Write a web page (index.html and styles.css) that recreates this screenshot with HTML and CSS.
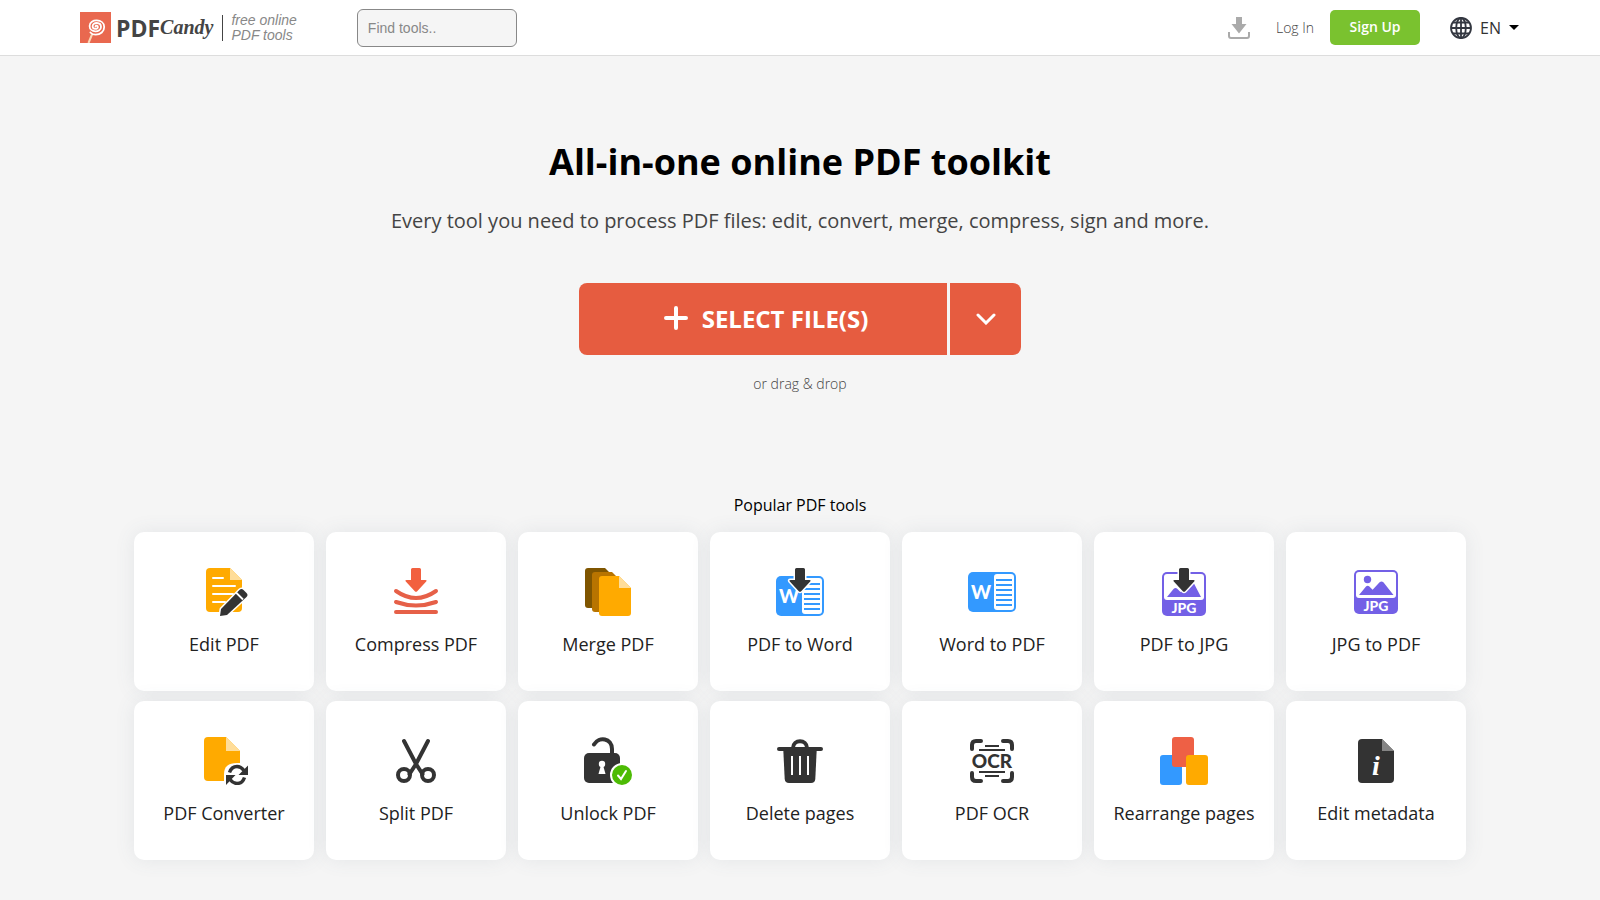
FILE: index.html
```
<!DOCTYPE html>
<html lang="en">
<head>
  <meta charset="UTF-8" />
  <meta name="viewport" content="width=device-width, initial-scale=1" />
  <title>PDF Candy - All-in-one online PDF toolkit</title>
  <link rel="stylesheet" href="styles.css">
</head>
<body>

  <header class="header">
    <a class="logo" href="#">
      <svg class="logo-mark" viewBox="0 0 31 31">
        <rect width="31" height="31" fill="#e9684f"/>
        <path d="M12 22.500 8.500 31" stroke="#fbd9b8" stroke-width="2"/>
        <path d="M15.500 14.500c0-1.500 2.400-1.200 2.400.6 0 2.500-5.300 2.700-5.300-.9 0-4.400 8.400-4.400 8.400.7 0 6-11.400 6-11.400-1 0-7.600 14.600-7.200 14.600 1 0 4.500-3.700 7.800-8.500 7.800-2.300 0-4.200-.9-5.300-2.200" fill="none" stroke="#fff" stroke-width="1.800" stroke-linecap="round"/>
      </svg>
      <span class="logo-pdf">PDF</span><span class="logo-candy">Candy</span>
      <span class="logo-slogan">free online<br>PDF tools</span>
    </a>
    <input class="search" type="text" placeholder="Find tools.." aria-label="Find tools">

    <nav class="user-nav">
      <a class="downloads" href="#" aria-label="Downloads">
        <svg width="22" height="22" viewBox="0 0 22 22" fill="#aaa">
          <path d="M8 0h6v7h4.500L11 16.500 3.500 7H8z"/>
          <path d="M1 15v4q0 2 2 2h16q2 0 2-2v-4" fill="none" stroke="#aaa" stroke-width="2"/>
        </svg>
      </a>
      <a class="login" href="#">Log In</a>
      <a class="signup" href="#">Sign Up</a>
      <button class="lang" type="button">
        <svg width="22" height="22" viewBox="0 0 22 22" fill="none" stroke="#333740" stroke-width="1.800">
          <circle cx="11" cy="11" r="10"/>
          <ellipse cx="11" cy="11" rx="4.800" ry="10"/>
          <path d="M11 1v20M1 11h20M3 5.500h16M3 16.500h16"/>
        </svg>
        <span>EN</span>
        <i class="caret"></i>
      </button>
    </nav>
  </header>

  <main>
    <section class="hero">
      <h1>All-in-one online PDF toolkit</h1>
      <p class="subtitle">Every tool you need to process PDF files: edit, convert, merge, compress, sign and more.</p>
      <div class="upload">
        <button class="upload-main" type="button">
          <svg width="24" height="24" viewBox="0 0 24 24"><path d="M12 2v20M2 12h20" stroke="#fff" stroke-width="4" stroke-linecap="round"/></svg>
          <span>SELECT FILE(S)</span>
        </button>
        <button class="upload-more" type="button" aria-label="More sources">
          <svg width="20" height="12" viewBox="0 0 20 12"><path d="M2 2l8 8 8-8" fill="none" stroke="#fff" stroke-width="3" stroke-linecap="round"/></svg>
        </button>
      </div>
      <p class="drop">or drag &amp; drop</p>
    </section>

    <section class="tools">
      <h2>Popular PDF tools</h2>
      <div class="grid">

        <a class="card" href="#">
          <svg viewBox="0 0 48 48">
            <path d="M10 0h20l12 12v28q0 4-4 4H10q-4 0-4-4V4q0-4 4-4z" fill="#fa0"/>
            <path d="M30 0l12 12H30z" fill="#ffdd99"/>
            <path d="M13 10h10M13 18h22M13 26h20M13 34h12" stroke="#fff" stroke-width="2" stroke-linecap="round"/>
            <path d="M20 48l1-7 18.500-19q2-2 4 0l3 3q2 2 0 4L27 47z" fill="#333" stroke="#fff" stroke-width="3" paint-order="stroke" stroke-linejoin="round"/>
            <path d="M36 24.500l7 7" stroke="#fff" stroke-width="1.800"/>
          </svg>
          <span>Edit PDF</span>
        </a>

        <a class="card" href="#">
          <svg viewBox="0 0 48 48">
            <path d="M20.500 0h7q1.500 0 1.500 1.500V12h4.500q2 0 .7 1.500l-9 9.700q-1.200 1.200-2.400 0l-9-9.700Q12.500 12 14.500 12H19V1.500Q19 0 20.500 0z" fill="#f2603f"/>
            <path d="M4 23q20 14 40 0M4 34q20 7 40 0M4 44h40" fill="none" stroke="#e66048" stroke-width="4" stroke-linecap="round"/>
          </svg>
          <span>Compress PDF</span>
        </a>

        <a class="card" href="#">
          <svg viewBox="0 0 48 48">
            <path d="M4 0h17l12 12v25q0 3-3 3H4q-3 0-3-3V3q0-3 3-3z" fill="#7f5500"/>
            <path d="M11 4h17l12 12v25q0 3-3 3H11q-3 0-3-3V7q0-3 3-3z" fill="#b87400"/>
            <path d="M18 8h17l12 12v25q0 3-3 3H18q-3 0-3-3V11q0-3 3-3z" fill="#fa0"/>
            <path d="M35 8l12 12H35z" fill="#ffdd99"/>
          </svg>
          <span>Merge PDF</span>
        </a>

        <a class="card" href="#">
          <svg viewBox="0 0 48 48">
            <rect y="8" width="48" height="40" rx="5" fill="#39f"/>
            <rect x="26" y="10" width="20" height="36" rx="3" fill="#fff"/>
            <path d="M28 16h16M28 21h16M28 26h16M28 31h16M28 36h16M28 41h16" stroke="#39f" stroke-width="2"/>
            <text class="w-mark" x="13" y="35">W</text>
            <path class="down" d="M20.500 0h7q1.500 0 1.500 1.500V12h4.500q2 0 .7 1.500l-9 9.700q-1.200 1.200-2.400 0l-9-9.700Q12.500 12 14.500 12H19V1.500Q19 0 20.500 0z"/>
          </svg>
          <span>PDF to Word</span>
        </a>

        <a class="card" href="#">
          <svg viewBox="0 0 48 48">
            <rect y="4" width="48" height="40" rx="5" fill="#39f"/>
            <rect x="26" y="6" width="20" height="36" rx="3" fill="#fff"/>
            <path d="M28 12h16M28 17h16M28 22h16M28 27h16M28 32h16M28 37h16" stroke="#39f" stroke-width="2"/>
            <text class="w-mark" x="13" y="31">W</text>
          </svg>
          <span>Word to PDF</span>
        </a>

        <a class="card" href="#">
          <svg viewBox="0 0 48 48">
            <rect x="2" y="4" width="44" height="44" rx="5" fill="#7360e6"/>
            <rect x="4" y="6" width="40" height="26" rx="3" fill="#fff"/>
            <path d="M7 29l6.500-8q2-2 4 0l3 3 9.500-9q2-1.500 4 .5L41 29z" fill="#7360e6"/>
            <text class="jpg" x="24" y="45">JPG</text>
            <path class="down" d="M20.500 0h7q1.500 0 1.500 1.500V12h4.500q2 0 .7 1.500l-9 9.700q-1.200 1.200-2.400 0l-9-9.700Q12.500 12 14.500 12H19V1.500Q19 0 20.500 0z"/>
          </svg>
          <span>PDF to JPG</span>
        </a>

        <a class="card" href="#">
          <svg viewBox="0 0 48 48">
            <rect x="2" y="2" width="44" height="44" rx="5" fill="#7360e6"/>
            <rect x="4" y="4" width="40" height="26" rx="3" fill="#fff"/>
            <circle cx="15.500" cy="11.500" r="3.700" fill="#7360e6"/>
            <path d="M7 27l7-8.500q1.700-1.500 3.400 0l3.200 3.200 7-7.400q1.900-1.600 3.800 0L41.500 27z" fill="#7360e6"/>
            <text class="jpg" x="24" y="43">JPG</text>
          </svg>
          <span>JPG to PDF</span>
        </a>

        <a class="card" href="#">
          <svg viewBox="0 0 48 48">
            <path d="M8 0h18l14 14v26q0 4-4 4H8q-4 0-4-4V4q0-4 4-4z" fill="#fa0"/>
            <path d="M26 0l14 14H26z" fill="#ffdd99"/>
            <path d="M24 37q0-11 13-11h11v22H24z" fill="#fff"/>
            <path d="M29.500 35.500q2-6 7.500-6 4 0 7 4M44.500 40.500q-2 6-7.500 6-4 0-7-4" fill="none" stroke="#333" stroke-width="3.400"/>
            <path d="M48 28.500v9.500h-9.500zM26 48v-10h9.500z" fill="#333"/>
          </svg>
          <span>PDF Converter</span>
        </a>

        <a class="card" href="#">
          <svg viewBox="0 0 48 48" fill="none" stroke="#333" stroke-width="4" stroke-linecap="round">
            <path d="M12 4l12 23 6.500 10M36 4L24 27l-6.500 10"/>
            <circle cx="12" cy="38" r="6"/>
            <circle cx="36" cy="38" r="6"/>
          </svg>
          <span>Split PDF</span>
        </a>

        <a class="card" href="#">
          <svg viewBox="0 0 48 48">
            <rect y="16" width="36" height="30" rx="5" fill="#333"/>
            <path d="M10 7.500C15-1 28 1 28 12v5" fill="none" stroke="#333" stroke-width="4" stroke-linecap="round"/>
            <circle cx="18" cy="27" r="3.200" fill="#fff"/>
            <path d="M17 28h2l2.500 9h-7z" fill="#fff"/>
            <circle cx="38" cy="38" r="11" fill="#4dbb05" stroke="#fff" stroke-width="2"/>
            <path d="M34 38.500l3 3.500 5-8" fill="none" stroke="#fff" stroke-width="2" stroke-linecap="round"/>
          </svg>
          <span>Unlock PDF</span>
        </a>

        <a class="card" href="#">
          <svg viewBox="0 0 48 48">
            <path d="M3 12h42" stroke="#333" stroke-width="4" stroke-linecap="round"/>
            <path d="M17 11c0-9 14-9 14 0" fill="none" stroke="#333" stroke-width="4"/>
            <path d="M7.300 13h33.400l-1.400 29q-.3 4-4.300 4H13q-4 0-4.300-4z" fill="#333"/>
            <path d="M16 19v19M24 19v19M32 19v19" stroke="#fff" stroke-width="2"/>
          </svg>
          <span>Delete pages</span>
        </a>

        <a class="card" href="#">
          <svg viewBox="0 0 48 48" fill="none" stroke="#333">
            <path d="M4 12V8q0-4 4-4h5M35 4h5q4 0 4 4v4M44 36v4q0 4-4 4h-5M13 44H8q-4 0-4-4v-4" stroke-width="4" stroke-linecap="round"/>
            <path d="M17 9h14M11 13h26M11 35h26M17 39h14" stroke-width="2"/>
            <text class="ocr" x="24" y="31">OCR</text>
          </svg>
          <span>PDF OCR</span>
        </a>

        <a class="card" href="#">
          <svg viewBox="0 0 48 48">
            <rect y="18" width="22" height="30" rx="3" fill="#39f"/>
            <rect x="12" width="22" height="30" rx="3" fill="#ee6045"/>
            <rect x="26" y="18" width="22" height="30" rx="3" fill="#fa0"/>
          </svg>
          <span>Rearrange pages</span>
        </a>

        <a class="card" href="#">
          <svg viewBox="0 0 48 48">
            <path d="M10 2h20l12 12v28q0 4-4 4H10q-4 0-4-4V6q0-4 4-4z" fill="#333"/>
            <path d="M30 2l12 12H30z" fill="#858585"/>
            <text class="info" x="24" y="38">i</text>
          </svg>
          <span>Edit metadata</span>
        </a>

      </div>
    </section>
  </main>

</body>
</html>
```

FILE: styles.css
```
*{box-sizing:border-box;}
body{margin:0;background:#f5f5f5;color:#222;font-family:"Open Sans", "Liberation Sans", sans-serif;}
a{color:inherit;text-decoration:none;}
button{border:none;padding:0;font-family:inherit;cursor:pointer;}
h1,h2,p{margin:0;}

/* header */
.header{display:flex;align-items:center;height:56px;padding:0 5%;background:#fff;border-bottom:1px solid #ddd;}
.logo{display:flex;align-items:center;}
.logo-mark{width:31px;height:31px;margin-right:5px;}
.logo-pdf{font-size:23px;font-weight:700;color:#444;}
.logo-candy{font:italic 700 20px "Liberation Serif", serif;color:#444;}
.logo-slogan{position:relative;padding-left:18px;font:italic 14px/15px "Liberation Sans", sans-serif;color:#888;white-space:nowrap;}
.logo-slogan::before{content:"";position:absolute;left:9px;top:2px;bottom:2px;border-left:1px solid #444;}
.search{width:160px;height:38px;margin-left:60px;padding:0 10px;background:#f5f5f5;border:1px solid #888;border-radius:6px;font:14px "Liberation Sans", sans-serif;}
.search::placeholder{color:#888;}
.user-nav{display:flex;align-items:center;margin-left:auto;font-size:14px;}
.downloads{display:flex;margin-right:26px;}
.login{margin-right:16px;font-weight:300;color:#444;}
.signup{width:90px;height:35px;margin-right:30px;background:#7ac22f;border-radius:5px;color:#fff;font-weight:600;line-height:34px;text-align:center;}
.lang{display:flex;align-items:center;gap:8px;background:none;color:#333;font-size:16px;padding-right:1px;}
.caret{border:5px solid transparent;border-top-color:#000;border-bottom:0;}

/* hero */
.hero{padding-top:81px;text-align:center;}
h1{font-size:36px;line-height:50px;color:#000;}
.subtitle{margin-top:19px;font-size:20px;line-height:30px;color:#444;}
.upload{display:flex;justify-content:center;gap:3px;margin-top:47px;}
.upload button{display:flex;align-items:center;justify-content:center;height:72px;background:#e65c40;color:#fff;}
.upload .upload-main{width:368px;gap:14px;padding:0 0 2px 6px;border-radius:8px 0 0 8px;font-size:24px;font-weight:700;}
.upload-more{width:71px;border-radius:0 8px 8px 0;}
.drop{margin-top:18px;font-size:14px;line-height:22px;font-weight:300;color:#444;}

/* tools */
.tools{max-width:1372px;margin:0 auto;padding:98px 20px 40px;}
h2{margin-bottom:15px;color:#000;font-size:16px;font-weight:400;line-height:24px;text-align:center;}
.grid{display:grid;grid-template-columns:repeat(7, 1fr);gap:10px 12px;}
.card{display:flex;flex-direction:column;align-items:center;height:159px;padding-top:36px;background:#fff;border-radius:10px;box-shadow:0 0 20px rgba(80,100,120,.1);font-size:18px;line-height:26px;}
.card svg{width:48px;height:48px;margin-bottom:15px;}
.down{fill:#333;stroke:#fff;stroke-width:3;paint-order:stroke;}
.w-mark{fill:#fff;font:900 19px Lato, sans-serif;text-anchor:middle;}
.jpg{fill:#fff;font:900 14px Lato, sans-serif;text-anchor:middle;}
.ocr{fill:#333;stroke:none;font:900 19px Lato, sans-serif;text-anchor:middle;}
.info{fill:#fff;font:italic 700 28px "Liberation Serif", serif;text-anchor:middle;}
```
